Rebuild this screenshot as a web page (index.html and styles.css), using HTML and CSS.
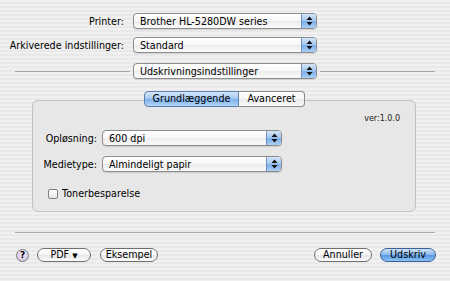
FILE: index.html
```html
<!DOCTYPE html>
<html lang="da">
<head>
    <meta charset="UTF-8">
    <title>Udskriv</title>
    <link rel="stylesheet" href="styles.css">
</head>
<body>
    <div class="dialog">
        <!-- printer / presets -->
        <div class="fields">
            <label class="label">Printer:</label>
            <div class="popup">
                <span class="popup-text">Brother HL-5280DW series</span>
                <span class="stepper"><svg width="7" height="10" viewBox="0 0 7 10"><path d="M3.5 0.5 L6.5 4 L0.5 4 Z M0.5 6 L6.5 6 L3.5 9.5 Z" fill="#111"/></svg></span>
            </div>
            <label class="label">Arkiverede indstillinger:</label>
            <div class="popup">
                <span class="popup-text">Standard</span>
                <span class="stepper"><svg width="7" height="10" viewBox="0 0 7 10"><path d="M3.5 0.5 L6.5 4 L0.5 4 Z M0.5 6 L6.5 6 L3.5 9.5 Z" fill="#111"/></svg></span>
            </div>
        </div>

        <div class="pane-select">
            <span class="rule"></span>
            <div class="popup">
                <span class="popup-text">Udskrivningsindstillinger</span>
                <span class="stepper"><svg width="7" height="10" viewBox="0 0 7 10"><path d="M3.5 0.5 L6.5 4 L0.5 4 Z M0.5 6 L6.5 6 L3.5 9.5 Z" fill="#111"/></svg></span>
            </div>
            <span class="rule"></span>
        </div>

        <!-- tabs -->
        <div class="tabs">
            <span class="tab selected">Grundlæggende</span>
            <span class="tab">Avanceret</span>
        </div>
        <div class="tab-box">
            <div class="version">ver:1.0.0</div>
            <div class="fields inner">
                <label class="label">Opløsning:</label>
                <div class="popup">
                    <span class="popup-text">600 dpi</span>
                    <span class="stepper"><svg width="7" height="10" viewBox="0 0 7 10"><path d="M3.5 0.5 L6.5 4 L0.5 4 Z M0.5 6 L6.5 6 L3.5 9.5 Z" fill="#111"/></svg></span>
                </div>
                <label class="label">Medietype:</label>
                <div class="popup">
                    <span class="popup-text">Almindeligt papir</span>
                    <span class="stepper"><svg width="7" height="10" viewBox="0 0 7 10"><path d="M3.5 0.5 L6.5 4 L0.5 4 Z M0.5 6 L6.5 6 L3.5 9.5 Z" fill="#111"/></svg></span>
                </div>
            </div>
            <div class="check-row">
                <span class="checkbox"></span>
                <span>Tonerbesparelse</span>
            </div>
        </div>

        <div class="separator"></div>

        <!-- buttons -->
        <div class="buttons">
            <span class="help">?</span>
            <span class="button pdf">PDF <small>▼</small></span>
            <span class="button preview">Eksempel</span>
            <span class="spacer"></span>
            <span class="button cancel">Annuller</span>
            <span class="button default">Udskriv</span>
        </div>
    </div>
</body>
</html>
```

FILE: styles.css
```css
* {
    margin: 0;
    padding: 0;
    box-sizing: border-box;
}

html, body {
    width: 450px;
    height: 281px;
    overflow: hidden;
}

body {
    font-family: "DejaVu Sans", sans-serif;
    font-size: 9.6px;
    color: #000;
    background: repeating-linear-gradient(to bottom, #f0f0f0 0px, #f0f0f0 2px, #e9e9e9 2px, #e9e9e9 4px);
}

.dialog {
    padding-top: 13px;
}

/* label + popup rows */
.fields {
    display: grid;
    grid-template-columns: 124px 184px;
    column-gap: 9px;
    row-gap: 8px;
    align-items: center;
}

.label {
    text-align: right;
    white-space: nowrap;
}

.popup {
    height: 16px;
    display: flex;
    align-items: center;
    border: 1px solid #8c8c8c;
    border-radius: 4px;
    background: linear-gradient(to bottom, #ffffff 0%, #f7f7f7 50%, #ececec 51%, #fafafa 100%);
    overflow: hidden;
    box-shadow: 0 1px 1px rgba(0, 0, 0, 0.12);
}

.popup-text {
    flex: 1;
    padding-left: 6px;
    white-space: nowrap;
}

.stepper {
    width: 15px;
    height: 100%;
    display: flex;
    align-items: center;
    justify-content: center;
    border-left: 1px solid #6c8fbf;
    background: linear-gradient(to bottom, #d3e5f8 0%, #a8caf0 45%, #7eb0ea 55%, #a9d0f6 100%);
}

.pane-select {
    display: flex;
    align-items: center;
    margin-top: 10px;
    padding: 0 15px;
}

.pane-select .popup {
    width: 184px;
    margin: 0 3px;
}

.rule {
    flex: 1;
    height: 1px;
    background: #a4a4a4;
}

/* tab view */
.tabs {
    display: flex;
    justify-content: center;
    margin-top: 12px;
    margin-bottom: -7px;
    padding-right: 1px;
    position: relative;
}

.tab {
    height: 16px;
    line-height: 14px;
    border: 1px solid #8a8a8a;
    background: linear-gradient(to bottom, #ffffff 0%, #f6f6f6 50%, #ebebeb 51%, #fafafa 100%);
    text-align: center;
}

.tab.selected {
    width: 95px;
    border-radius: 4px 0 0 4px;
    border-color: #5c7fae;
    background: linear-gradient(to bottom, #d4e6f9 0%, #a9cbf1 45%, #7fb1ea 55%, #b2d6f7 100%);
}

.tab:last-child {
    width: 66px;
    border-left: none;
    border-radius: 0 4px 4px 0;
}

.tab-box {
    margin: 0 34px 0 32px;
    height: 112px;
    border: 1px solid #c3c3c3;
    border-radius: 6px;
    background: #e7e7e7;
    padding-top: 13px;
}

.version {
    text-align: right;
    padding-right: 15px;
    font-size: 8px;
    color: #222;
    line-height: 10px;
}

.fields.inner {
    grid-template-columns: 59px 180px;
    column-gap: 5px;
    row-gap: 10px;
    padding-left: 5px;
    margin-top: 6px;
}

.check-row {
    display: flex;
    align-items: center;
    gap: 4px;
    margin-top: 16px;
    padding-left: 15px;
}

.checkbox {
    width: 10px;
    height: 10px;
    border: 1px solid #808080;
    border-radius: 2px;
    background: linear-gradient(to bottom, #ffffff, #e6e6e6);
}

.separator {
    margin: 20px 15px 0;
    height: 2px;
    border-top: 1px solid #a8a8a8;
    border-bottom: 1px solid #f8f8f8;
}

/* bottom buttons */
.buttons {
    display: flex;
    align-items: center;
    margin-top: 14px;
    padding: 0 14px 0 16px;
}

.help {
    width: 13px;
    height: 13px;
    border-radius: 50%;
    border: 1px solid #7d7d7d;
    background: radial-gradient(circle at 50% 30%, #f5effa 0%, #d8c8e8 70%, #c4b0da 100%);
    font-size: 9px;
    font-weight: bold;
    line-height: 11px;
    text-align: center;
    margin-right: 8px;
}

.button {
    height: 14px;
    line-height: 12px;
    border: 1px solid #6e6e6e;
    border-radius: 7px;
    background: linear-gradient(to bottom, #ffffff 0%, #f6f6f6 50%, #e6e6e6 51%, #fbfbfb 100%);
    text-align: center;
    white-space: nowrap;
}

.button small {
    font-size: 7px;
}

.pdf {
    width: 54px;
}

.preview {
    width: 58px;
    margin-left: 9px;
}

.spacer {
    flex: 1;
}

.cancel {
    width: 58px;
    margin-right: 8px;
}

.default {
    width: 56px;
    border-color: #3b5f96;
    background: linear-gradient(to bottom, #cfe3f8 0%, #8ebdef 45%, #5a98e3 55%, #8cc4f4 100%);
}
```
